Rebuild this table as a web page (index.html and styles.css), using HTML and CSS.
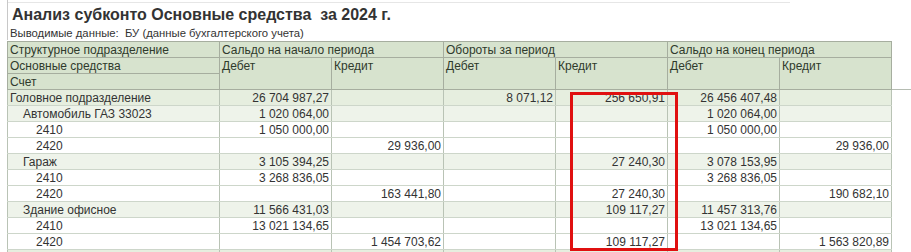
FILE: index.html
```html
<!DOCTYPE html>
<html lang="ru">
<head>
<meta charset="utf-8">
<title>Анализ субконто</title>
<link rel="stylesheet" href="styles.css">
</head>
<body>
<div class="page">
  <div class="head">
    <h1 class="title">Анализ субконто Основные средства&nbsp; за 2024 г.</h1>
    <div class="sub">Выводимые данные:&nbsp; БУ (данные бухгалтерского учета)</div>
  </div>
  <div class="grid-row">
    <table class="report">
      <colgroup>
        <col class="c-name"><col class="c-num"><col class="c-num"><col class="c-num"><col class="c-num"><col class="c-num"><col class="c-num">
      </colgroup>
      <thead>
        <tr>
          <th>Структурное подразделение</th>
          <th colspan="2">Сальдо на начало периода</th>
          <th colspan="2">Обороты за период</th>
          <th colspan="2">Сальдо на конец периода</th>
        </tr>
        <tr>
          <th>Основные средства</th>
          <th rowspan="2" class="top">Дебет</th>
          <th rowspan="2" class="top">Кредит</th>
          <th rowspan="2" class="top">Дебет</th>
          <th rowspan="2" class="top">Кредит</th>
          <th rowspan="2" class="top">Дебет</th>
          <th rowspan="2" class="top">Кредит</th>
        </tr>
        <tr>
          <th>Счет</th>
        </tr>
      </thead>
      <tbody>
        <tr class="l0">
          <td>Головное подразделение</td><td>26 704 987,27</td><td></td><td>8 071,12</td><td>256 650,91</td><td>26 456 407,48</td><td></td>
        </tr>
        <tr class="l1">
          <td><span class="i1">Автомобиль ГАЗ 33023</span></td><td>1 020 064,00</td><td></td><td></td><td></td><td>1 020 064,00</td><td></td>
        </tr>
        <tr class="l2">
          <td><span class="i2">2410</span></td><td>1 050 000,00</td><td></td><td></td><td></td><td>1 050 000,00</td><td></td>
        </tr>
        <tr class="l2">
          <td><span class="i2">2420</span></td><td></td><td>29 936,00</td><td></td><td></td><td></td><td>29 936,00</td>
        </tr>
        <tr class="l1">
          <td><span class="i1">Гараж</span></td><td>3 105 394,25</td><td></td><td></td><td>27 240,30</td><td>3 078 153,95</td><td></td>
        </tr>
        <tr class="l2">
          <td><span class="i2">2410</span></td><td>3 268 836,05</td><td></td><td></td><td></td><td>3 268 836,05</td><td></td>
        </tr>
        <tr class="l2">
          <td><span class="i2">2420</span></td><td></td><td>163 441,80</td><td></td><td>27 240,30</td><td></td><td>190 682,10</td>
        </tr>
        <tr class="l1">
          <td><span class="i1">Здание офисное</span></td><td>11 566 431,03</td><td></td><td></td><td>109 117,27</td><td>11 457 313,76</td><td></td>
        </tr>
        <tr class="l2">
          <td><span class="i2">2410</span></td><td>13 021 134,65</td><td></td><td></td><td></td><td>13 021 134,65</td><td></td>
        </tr>
        <tr class="l2">
          <td><span class="i2">2420</span></td><td></td><td>1 454 703,62</td><td></td><td>109 117,27</td><td></td><td>1 563 820,89</td>
        </tr>
        <tr class="l0">
          <td>&nbsp;</td><td></td><td></td><td></td><td></td><td></td><td></td>
        </tr>
      </tbody>
    </table>
    <div class="tail"></div>
  </div>
  <div class="mark"></div>
</div>
</body>
</html>
```
FILE: styles.css
```css
html, body {
  margin: 0;
  padding: 0;
  background: #ffffff;
  overflow: hidden;
}
body {
  font-family: "Liberation Sans", Arial, sans-serif;
  color: #333333;
}
.page {
  position: relative;
  width: 911px;
  height: 252px;
  overflow: hidden;
}
.head {
  margin-left: 7px;
  width: 783px;
  height: 40px;
  border-left: 1px solid #c8c8c8;
  box-sizing: border-box;
  padding-top: 2px;
}
.title {
  margin: 0;
  padding-top: 2px;
  padding-left: 4px;
  border-top: 1px solid #e6e6e6;
  font-size: 16px;
  line-height: 19px;
  font-weight: bold;
  color: #333333;
}
.sub {
  margin-top: 3px;
  padding-left: 2px;
  font-size: 11.3px;
  line-height: 13px;
  color: #333333;
}
.grid-row {
  display: flex;
  margin-top: 1px;
  margin-left: 7px;
}
.tail {
  flex: 1;
  margin-top: 48px;
  height: 0;
  border-top: 1px solid #b5bcb2;
}
.report {
  border-collapse: collapse;
  table-layout: fixed;
  width: 884px;
  font-size: 12px;
}
.c-name { width: 212px; }
.c-num { width: 112px; }
.report th {
  background: #d7e3ce;
  border: 1px solid #a6ae9f;
  font-weight: normal;
  text-align: left;
  color: #2f3a2c;
  height: 13px;
  line-height: 13px;
  padding: 2px 2px 0;
  white-space: nowrap;
  vertical-align: top;
}
.report td {
  height: 13px;
  line-height: 13px;
  padding: 2px 2px 0;
  white-space: nowrap;
  text-align: right;
  vertical-align: top;
  border-left: 1px solid #b9c3b5;
  border-right: 1px solid #b9c3b5;
  border-top: 1px solid #cdd6ca;
  border-bottom: 1px solid #cdd6ca;
}
.report td:first-child {
  text-align: left;
}
.l0 td { background: #e6eedf; }
.l1 td { background: #eef3ea; }
.l2 td { background: #ffffff; }
.i1 { padding-left: 13px; }
.i2 { padding-left: 26px; }
.mark {
  position: absolute;
  left: 570px;
  top: 92px;
  width: 102px;
  height: 153px;
  border: 3px solid #e01010;
}
```
